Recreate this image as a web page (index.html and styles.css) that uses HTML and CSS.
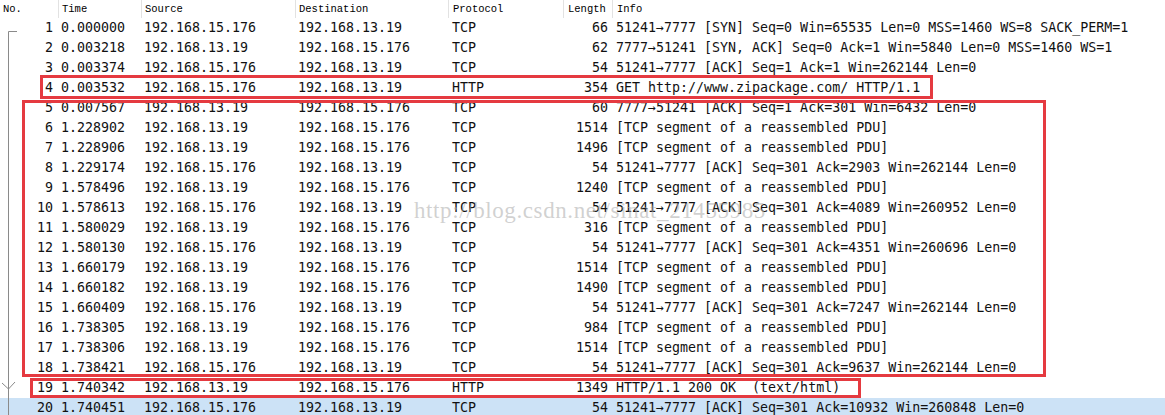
FILE: index.html
```html
<!DOCTYPE html>
<html>
<head>
<meta charset="utf-8">
<link rel="stylesheet" href="styles.css">
</head>
<body>
<div class="list">
  <div class="row head">
    <div class="c no">No.</div>
    <div class="c time">Time</div>
    <div class="c src">Source</div>
    <div class="c dst">Destination</div>
    <div class="c proto">Protocol</div>
    <div class="c len">Length</div>
    <div class="c info">Info</div>
  </div>
  <div class="row"><div class="c no">1</div><div class="c time">0.000000</div><div class="c src">192.168.15.176</div><div class="c dst">192.168.13.19</div><div class="c proto">TCP</div><div class="c len">66</div><div class="c info">51241→7777 [SYN] Seq=0 Win=65535 Len=0 MSS=1460 WS=8 SACK_PERM=1</div></div>
  <div class="row"><div class="c no">2</div><div class="c time">0.003218</div><div class="c src">192.168.13.19</div><div class="c dst">192.168.15.176</div><div class="c proto">TCP</div><div class="c len">62</div><div class="c info">7777→51241 [SYN, ACK] Seq=0 Ack=1 Win=5840 Len=0 MSS=1460 WS=1</div></div>
  <div class="row"><div class="c no">3</div><div class="c time">0.003374</div><div class="c src">192.168.15.176</div><div class="c dst">192.168.13.19</div><div class="c proto">TCP</div><div class="c len">54</div><div class="c info">51241→7777 [ACK] Seq=1 Ack=1 Win=262144 Len=0</div></div>
  <div class="row"><div class="c no">4</div><div class="c time">0.003532</div><div class="c src">192.168.15.176</div><div class="c dst">192.168.13.19</div><div class="c proto">HTTP</div><div class="c len">354</div><div class="c info">GET http://www.zipackage.com/ HTTP/1.1</div></div>
  <div class="row"><div class="c no">5</div><div class="c time">0.007567</div><div class="c src">192.168.13.19</div><div class="c dst">192.168.15.176</div><div class="c proto">TCP</div><div class="c len">60</div><div class="c info">7777→51241 [ACK] Seq=1 Ack=301 Win=6432 Len=0</div></div>
  <div class="row"><div class="c no">6</div><div class="c time">1.228902</div><div class="c src">192.168.13.19</div><div class="c dst">192.168.15.176</div><div class="c proto">TCP</div><div class="c len">1514</div><div class="c info">[TCP segment of a reassembled PDU]</div></div>
  <div class="row"><div class="c no">7</div><div class="c time">1.228906</div><div class="c src">192.168.13.19</div><div class="c dst">192.168.15.176</div><div class="c proto">TCP</div><div class="c len">1496</div><div class="c info">[TCP segment of a reassembled PDU]</div></div>
  <div class="row"><div class="c no">8</div><div class="c time">1.229174</div><div class="c src">192.168.15.176</div><div class="c dst">192.168.13.19</div><div class="c proto">TCP</div><div class="c len">54</div><div class="c info">51241→7777 [ACK] Seq=301 Ack=2903 Win=262144 Len=0</div></div>
  <div class="row"><div class="c no">9</div><div class="c time">1.578496</div><div class="c src">192.168.13.19</div><div class="c dst">192.168.15.176</div><div class="c proto">TCP</div><div class="c len">1240</div><div class="c info">[TCP segment of a reassembled PDU]</div></div>
  <div class="row"><div class="c no">10</div><div class="c time">1.578613</div><div class="c src">192.168.15.176</div><div class="c dst">192.168.13.19</div><div class="c proto">TCP</div><div class="c len">54</div><div class="c info">51241→7777 [ACK] Seq=301 Ack=4089 Win=260952 Len=0</div></div>
  <div class="row"><div class="c no">11</div><div class="c time">1.580029</div><div class="c src">192.168.13.19</div><div class="c dst">192.168.15.176</div><div class="c proto">TCP</div><div class="c len">316</div><div class="c info">[TCP segment of a reassembled PDU]</div></div>
  <div class="row"><div class="c no">12</div><div class="c time">1.580130</div><div class="c src">192.168.15.176</div><div class="c dst">192.168.13.19</div><div class="c proto">TCP</div><div class="c len">54</div><div class="c info">51241→7777 [ACK] Seq=301 Ack=4351 Win=260696 Len=0</div></div>
  <div class="row"><div class="c no">13</div><div class="c time">1.660179</div><div class="c src">192.168.13.19</div><div class="c dst">192.168.15.176</div><div class="c proto">TCP</div><div class="c len">1514</div><div class="c info">[TCP segment of a reassembled PDU]</div></div>
  <div class="row"><div class="c no">14</div><div class="c time">1.660182</div><div class="c src">192.168.13.19</div><div class="c dst">192.168.15.176</div><div class="c proto">TCP</div><div class="c len">1490</div><div class="c info">[TCP segment of a reassembled PDU]</div></div>
  <div class="row"><div class="c no">15</div><div class="c time">1.660409</div><div class="c src">192.168.15.176</div><div class="c dst">192.168.13.19</div><div class="c proto">TCP</div><div class="c len">54</div><div class="c info">51241→7777 [ACK] Seq=301 Ack=7247 Win=262144 Len=0</div></div>
  <div class="row"><div class="c no">16</div><div class="c time">1.738305</div><div class="c src">192.168.13.19</div><div class="c dst">192.168.15.176</div><div class="c proto">TCP</div><div class="c len">984</div><div class="c info">[TCP segment of a reassembled PDU]</div></div>
  <div class="row"><div class="c no">17</div><div class="c time">1.738306</div><div class="c src">192.168.13.19</div><div class="c dst">192.168.15.176</div><div class="c proto">TCP</div><div class="c len">1514</div><div class="c info">[TCP segment of a reassembled PDU]</div></div>
  <div class="row"><div class="c no">18</div><div class="c time">1.738421</div><div class="c src">192.168.15.176</div><div class="c dst">192.168.13.19</div><div class="c proto">TCP</div><div class="c len">54</div><div class="c info">51241→7777 [ACK] Seq=301 Ack=9637 Win=262144 Len=0</div></div>
  <div class="row"><div class="c no">19</div><div class="c time">1.740342</div><div class="c src">192.168.13.19</div><div class="c dst">192.168.15.176</div><div class="c proto">HTTP</div><div class="c len">1349</div><div class="c info">HTTP/1.1 200 OK  (text/html)</div></div>
  <div class="row sel"><div class="c no">20</div><div class="c time">1.740451</div><div class="c src">192.168.15.176</div><div class="c dst">192.168.13.19</div><div class="c proto">TCP</div><div class="c len">54</div><div class="c info">51241→7777 [ACK] Seq=301 Ack=10932 Win=260848 Len=0</div></div>

  <svg class="gutter" width="20" height="415" viewBox="0 0 20 415">
    <polyline points="17,31.5 8.5,31.5 8.5,415" fill="none" stroke="#8a8a8a" stroke-width="1"/>
    <polyline points="2,383 8.5,389 15,382" fill="none" stroke="#8a8a8a" stroke-width="1"/>
  </svg>
  <div class="watermark">http://blog.csdn.net/sinat_21455985</div>
  <div class="box box1"></div>
  <div class="box box2"></div>
  <div class="box box3"></div>
</div>
</body>
</html>
```
FILE: styles.css
```css
html, body {
  margin: 0;
  padding: 0;
  background: #ffffff;
  overflow: hidden;
}
.list {
  position: relative;
  width: 1165px;
  height: 415px;
  overflow: hidden;
  font-family: "DejaVu Sans Mono", "Liberation Mono", monospace;
  font-size: 13.3px;
  color: #111;
}
.row {
  display: grid;
  grid-template-columns: 58px 83px 154px 153px 115px 49px 1fr;
  height: 20px;
  line-height: 20px;
  white-space: pre;
}
.row.sel {
  background: #cce2f6;
}
.c {
  overflow: visible;
}
.no { text-align: right; padding-right: 5px; }
.time { padding-left: 3px; }
.src { padding-left: 3px; }
.dst { padding-left: 3px; }
.proto { padding-left: 4px; }
.len { text-align: right; padding-right: 4px; }
.info { padding-left: 4px; }

.row.head {
  height: 18px;
  line-height: 18px;
  font-family: "Liberation Mono", monospace;
  font-size: 10.5px;
  color: #000;
}
.head .no { text-align: left; padding-left: 3px; padding-right: 0; }
.head .c + .c { border-left: 1px solid #e2e2e2; }
.head .len { text-align: left; padding-left: 4px; padding-right: 0; }

.gutter {
  position: absolute;
  left: 0;
  top: 0;
}
.watermark {
  position: absolute;
  left: 414px;
  top: 198px;
  font-family: "Liberation Serif", serif;
  font-size: 23px;
  color: rgba(170, 170, 170, 0.55);
  white-space: nowrap;
  letter-spacing: 0.6px;
}
.box {
  position: absolute;
  border: 3px solid #e53a40;
  box-sizing: border-box;
}
.box1 { left: 40px; top: 75px; width: 893px; height: 24px; }
.box2 { left: 22px; top: 100px; width: 1024px; height: 277px; }
.box3 { left: 30px; top: 378px; width: 831px; height: 20px; }
```
